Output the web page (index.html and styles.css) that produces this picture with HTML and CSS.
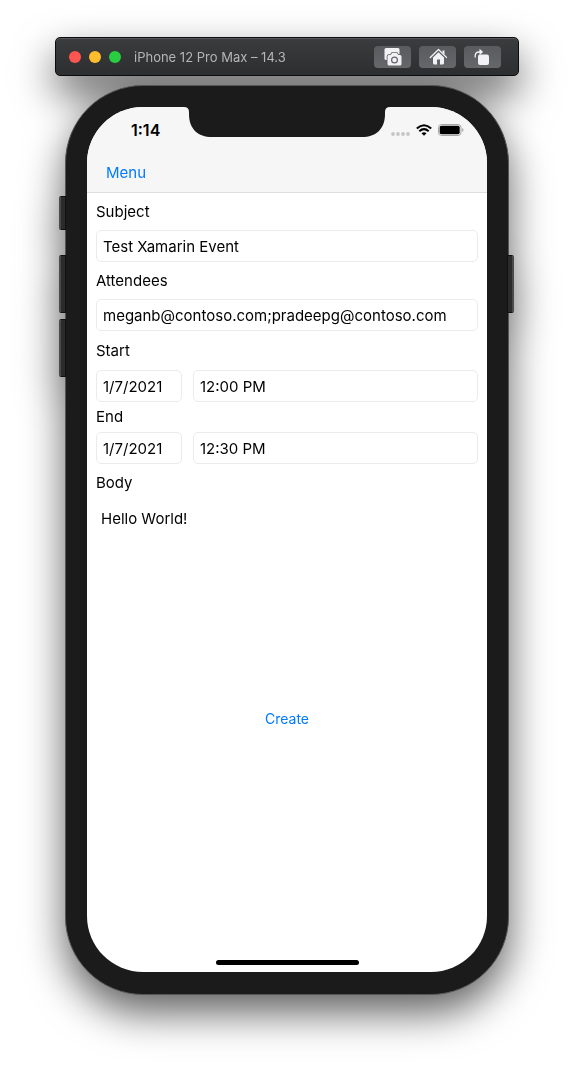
FILE: index.html
```html
<!DOCTYPE html>
<html lang="en">
<head>
<meta charset="utf-8">
<meta name="viewport" content="width=device-width, initial-scale=1">
<title>iPhone 12 Pro Max – 14.3</title>
<link rel="stylesheet" href="styles.css">
</head>
<body>
<div class="simulator">
  <header class="titlebar">
    <div class="lights">
      <button class="light close" aria-label="Close"></button>
      <button class="light minimize" aria-label="Minimize"></button>
      <button class="light zoom" aria-label="Zoom"></button>
    </div>
    <h1 class="title">iPhone 12 Pro Max – 14.3</h1>
    <div class="tools">
      <button class="tool" aria-label="Take screenshot">
        <svg width="18" height="18" viewBox="0 0 18 18">
          <rect x=".5" y="0" width="15" height="12" rx="1.500" fill="#f2f2f4"/>
          <path fill="#f2f2f4" stroke="#616265" stroke-width="1.600" paint-order="stroke" d="M5 7H6.800L8 5h5l1.200 2H16q1.500 0 1.500 1.500V16q0 1.500-1.500 1.500H5Q3.500 17.500 3.500 16V8.500Q3.500 7 5 7z"/>
          <circle cx="10.500" cy="12" r="2.900" fill="none" stroke="#646568" stroke-width="1.200"/>
        </svg>
      </button>
      <button class="tool" aria-label="Home">
        <svg width="18" height="18" viewBox="0 0 18 18">
          <path fill="none" stroke="#f2f2f4" stroke-width="1.300" stroke-linecap="round" stroke-linejoin="round" d="M1.300 9.500 9.500 1.500l8.200 8"/>
          <path fill="#f2f2f4" d="M13.500 2.500h2v4.200l-2-2zM9.500 4.200l5.500 5.400V15q0 1.500-1.500 1.500H11V11.500H8v5H5.500Q4 16.500 4 15V9.600z"/>
        </svg>
      </button>
      <button class="tool" aria-label="Rotate">
        <svg width="18" height="18" viewBox="0 0 18 18">
          <path fill="none" stroke="#f2f2f4" stroke-width="1.300" d="M1.200 9.500V8Q1.200 4 5 4H6"/>
          <path fill="#f2f2f4" d="M5.500.8 9.200 4 5.500 7z"/>
          <rect x="4" y="6.500" width="11" height="10.500" rx="2" fill="#f2f2f4"/>
        </svg>
      </button>
    </div>
  </header>

  <div class="phone">
    <span class="key key-mute"></span>
    <span class="key key-up"></span>
    <span class="key key-down"></span>
    <span class="key key-power"></span>
    <div class="screen">
      <svg class="notch" width="206" height="30" viewBox="0 0 206 30">
        <path fill="#1b1b1b" d="M0 0H206Q201 0 201 5V7C201 22 192 30 178 30H28C14 30 5 22 5 7V5Q5 0 0 0z"/>
      </svg>
      <div class="top">
        <div class="status">
          <span class="time">1:14</span>
          <div class="indicators">
            <svg width="19" height="4" viewBox="0 0 19 4" fill="#c6c6c6"><circle cx="2" cy="2" r="1.900"/><circle cx="7" cy="2" r="1.900"/><circle cx="12" cy="2" r="1.900"/><circle cx="17" cy="2" r="1.900"/></svg>
            <svg class="wifi" width="16" height="12" viewBox="0 0 16 12">
              <g fill="none" stroke="#000" stroke-width="2"><path d="M.8 4.500Q8-2 15.200 4.500"/><path d="M3.300 7.200Q8 3 12.700 7.200"/></g>
              <path d="M5.500 9.300Q8 7.200 10.500 9.300L8 11.800z"/>
            </svg>
            <svg class="battery" width="26" height="12" viewBox="0 0 26 12">
              <rect x=".5" y=".5" width="22.500" height="11" rx="3" fill="none" stroke="#a5a5a5"/>
              <rect x="1.700" y="1.700" width="20" height="8.600" rx="1.700"/>
              <path fill="#a5a5a5" d="M24.200 4q1.300.5 1.300 2t-1.300 2z"/>
            </svg>
          </div>
        </div>
        <nav class="nav"><a class="menu" href="#menu">Menu</a></nav>
      </div>
      <form class="form">
        <label class="label" for="subject">Subject</label>
        <input class="field" id="subject" type="text" value="Test Xamarin Event">
        <label class="label" for="attendees">Attendees</label>
        <input class="field" id="attendees" type="text" value="meganb@contoso.com;pradeepg@contoso.com">
        <label class="label label-tall" for="start">Start</label>
        <div class="pair">
          <input class="field" id="start" type="text" value="1/7/2021">
          <input class="field" type="text" aria-label="Start time" value="12:00 PM">
        </div>
        <label class="label label-tight" for="end">End</label>
        <div class="pair">
          <input class="field" id="end" type="text" value="1/7/2021">
          <input class="field" type="text" aria-label="End time" value="12:30 PM">
        </div>
        <label class="label" for="body">Body</label>
        <textarea class="editor" id="body">Hello World!</textarea>
        <button class="create" type="button">Create</button>
      </form>
      <div class="home-bar"></div>
    </div>
  </div>
</div>
</body>
</html>
```
FILE: styles.css
```css
* {
  box-sizing: border-box;
}

body {
  margin: 0;
  background: #fff;
  font-family: Inter, "Liberation Sans", sans-serif;
  font-size: 15px;
  color: #000;
}

button,
input,
textarea {
  font: inherit;
  color: inherit;
  margin: 0;
}

.simulator {
  display: flex;
  flex-direction: column;
  gap: 9px;
  min-height: 100vh;
  padding: 37px 55px 74px;
  filter: drop-shadow(0 18px 20px rgba(0, 0, 0, 0.62));
}

.titlebar {
  display: flex;
  align-items: center;
  height: 39px;
  padding: 0 17px 0 13px;
  border: 1px solid #0c0c0d;
  border-radius: 5px;
  background: linear-gradient(#3b3c3e, #2d2e30);
  box-shadow: inset 0 1px #56575a;
}

.lights {
  display: flex;
  gap: 8px;
}

.light {
  width: 12px;
  height: 12px;
  padding: 0;
  border: 0;
  border-radius: 50%;
}

.close {
  background: #ff5550;
}

.minimize {
  background: #ffbd2e;
}

.zoom {
  background: #28cd41;
}

.title {
  flex: 1;
  margin: 0 0 0 13px;
  font-size: 13px;
  font-weight: 400;
  line-height: 16px;
  white-space: nowrap;
  color: #b4b5b6;
}

.tools {
  display: flex;
  gap: 8px;
}

.tool {
  display: grid;
  place-items: center;
  width: 37px;
  height: 22px;
  padding: 0;
  border: 0;
  border-radius: 4px;
  background: linear-gradient(#5a5b5e, #666769);
}

.phone {
  position: relative;
  display: flex;
  flex: 1;
  margin: 0 10px;
  padding: 21px 21px 22px;
  border: 1px solid #565656;
  border-radius: 78px;
  background: #1b1b1b;
}

.key {
  position: absolute;
  left: -7px;
  width: 7px;
  border: 1px solid #111;
  border-left: 2px solid #4a4a4a;
  border-radius: 2px 0 0 2px;
  background: #2b2b2b;
}

.key-mute {
  top: 110px;
  height: 34px;
}

.key-up {
  top: 169px;
  height: 58px;
}

.key-down {
  top: 233px;
  height: 58px;
}

.key-power {
  top: 169px;
  right: -6px;
  left: auto;
  height: 58px;
  transform: scaleX(-1);
}

.screen {
  position: relative;
  display: flex;
  flex: 1;
  flex-direction: column;
  min-width: 0;
  overflow: hidden;
  border-radius: 56px;
  background: #fff;
}

.notch {
  position: absolute;
  top: 0;
  left: 50%;
  transform: translateX(-50%);
}

.top {
  border-bottom: 1px solid #dedede;
  background: #f6f6f6;
}

.status {
  display: flex;
  align-items: center;
  justify-content: space-between;
  height: 45px;
  padding: 0 23px 0 44px;
}

.time {
  font-size: 16px;
  font-weight: 600;
}

.indicators {
  display: flex;
  align-items: flex-end;
  gap: 6px;
}

.nav {
  display: flex;
  align-items: center;
  height: 40px;
  padding: 0 19px;
}

.menu {
  color: #007aff;
  text-decoration: none;
}

.form {
  display: flex;
  flex: 1;
  flex-direction: column;
  padding: 0 9px;
}

.label {
  line-height: 37px;
}

.label-tall {
  line-height: 39px;
}

.label-tight {
  line-height: 30px;
}

.field {
  width: 100%;
  min-width: 0;
  height: 32px;
  padding: 0 6px;
  border: 1px solid #ebebeb;
  border-radius: 5px;
  background: #fff;
}

.pair {
  display: grid;
  grid-template-columns: 86px 1fr;
  gap: 11px;
}

.editor {
  height: 202px;
  padding: 8px 5px;
  border: 0;
  background: transparent;
  line-height: 20px;
  resize: none;
}

.create {
  align-self: center;
  padding: 0;
  border: 0;
  background: transparent;
  font-size: 14px;
  line-height: 32px;
  color: #007aff;
}

.home-bar {
  align-self: center;
  width: 143px;
  height: 5px;
  margin: 7px;
  border-radius: 3px;
  background: #000;
}
```
